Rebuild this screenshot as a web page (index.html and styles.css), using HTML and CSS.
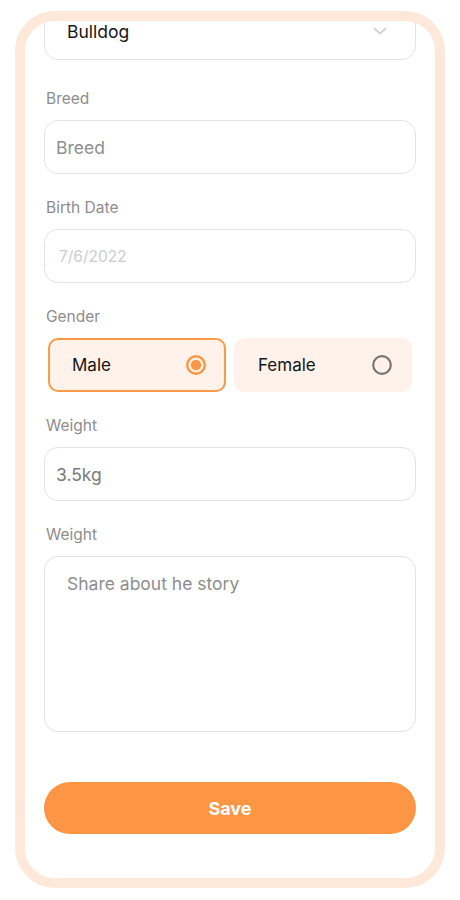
FILE: index.html
```html
<!DOCTYPE html>
<html lang="en">
<head>
<meta charset="utf-8">
<title>Pet profile</title>
<link rel="stylesheet" href="styles.css">
</head>
<body>
<div class="phone">
  <form class="form">
    <div class="select">
      <span class="select-value">Bulldog</span>
      <svg class="chevron" width="14" height="8" viewBox="0 0 14 8"><path d="M1.5 1.5 L7 6.5 L12.5 1.5" fill="none" stroke="#d4d4d4" stroke-width="1.8" stroke-linecap="round" stroke-linejoin="round"/></svg>
    </div>

    <div class="field">
      <label class="label">Breed</label>
      <input class="input" type="text" placeholder="Breed">
    </div>

    <div class="field">
      <label class="label">Birth Date</label>
      <input class="input input-date" type="text" placeholder="7/6/2022">
    </div>

    <div class="field">
      <label class="label">Gender</label>
      <div class="gender-row">
        <div class="gender gender-active">
          <span>Male</span>
          <svg width="20" height="20" viewBox="0 0 20 20"><circle cx="10" cy="10" r="8.8" fill="none" stroke="#fc9644" stroke-width="2.4"/><circle cx="10" cy="10" r="5.2" fill="#fc9644"/></svg>
        </div>
        <div class="gender">
          <span>Female</span>
          <svg width="20" height="20" viewBox="0 0 20 20"><circle cx="10" cy="10" r="8.8" fill="none" stroke="#767676" stroke-width="2.2"/></svg>
        </div>
      </div>
    </div>

    <div class="field">
      <label class="label">Weight</label>
      <input class="input input-value" type="text" value="3.5kg">
    </div>

    <div class="field">
      <label class="label">Weight</label>
      <textarea class="textarea" placeholder="Share about he story"></textarea>
    </div>

    <button class="save" type="button">Save</button>
  </form>
</div>
</body>
</html>
```

FILE: styles.css
```css
* { box-sizing: border-box; }

body {
  margin: 0;
  background: #ffffff;
  font-family: Inter, "Noto Sans", sans-serif;
}

.phone {
  width: 430px;
  height: 877px;
  margin: 11px 0 0 15px;
  border: 10px solid #fee8d9;
  border-radius: 40px;
  overflow: hidden;
  background: #ffffff;
}

.form {
  margin-top: -15px;
  padding: 0 19px;
  display: flex;
  flex-direction: column;
  gap: 24px;
}

.select {
  height: 54px;
  border: 1px solid #e3e3e3;
  border-radius: 14px;
  padding: 0 28px 0 22px;
  display: flex;
  align-items: center;
  justify-content: space-between;
  margin-bottom: 5px;
}

.select-value {
  font-size: 17.5px;
  color: #151515;
  margin-top: -3px;
}

.chevron { margin-top: -4px; }

.field {
  display: flex;
  flex-direction: column;
}

.label {
  font-size: 15.5px;
  line-height: 20px;
  color: #8d8d8d;
  margin-bottom: 11px;
  padding-left: 2px;
}

.input {
  height: 54px;
  width: 100%;
  border: 1px solid #e3e3e3;
  border-radius: 14px;
  padding: 0 11px;
  font-family: inherit;
  font-size: 17.5px;
  color: #7b7b7b;
  background: #ffffff;
  outline: none;
}

.input::placeholder { color: #8e8e8e; }
.input-date { font-size: 15.5px; padding-left: 14px; }
.input-date::placeholder { color: #cdcdcd; }

.gender-row {
  display: flex;
  gap: 8px;
  padding: 0 4px;
}

.gender {
  flex: 1;
  height: 54px;
  border: 2px solid transparent;
  border-radius: 10px;
  background: #fef2ea;
  display: flex;
  align-items: center;
  justify-content: space-between;
  padding: 0 18px 0 22px;
  font-size: 17px;
  color: #151515;
}

.gender-active { border-color: #fd9a48; }

.textarea {
  height: 176px;
  width: 100%;
  border: 1px solid #e3e3e3;
  border-radius: 14px;
  padding: 16px 22px;
  font-family: inherit;
  font-size: 17.5px;
  color: #7b7b7b;
  resize: none;
  outline: none;
}

.textarea::placeholder { color: #8e8e8e; }

.save {
  margin-top: 26px;
  height: 52px;
  border: none;
  border-radius: 26px;
  background: #fc9644;
  color: #ffffff;
  font-family: inherit;
  font-size: 18px;
  font-weight: 700;
}
```
